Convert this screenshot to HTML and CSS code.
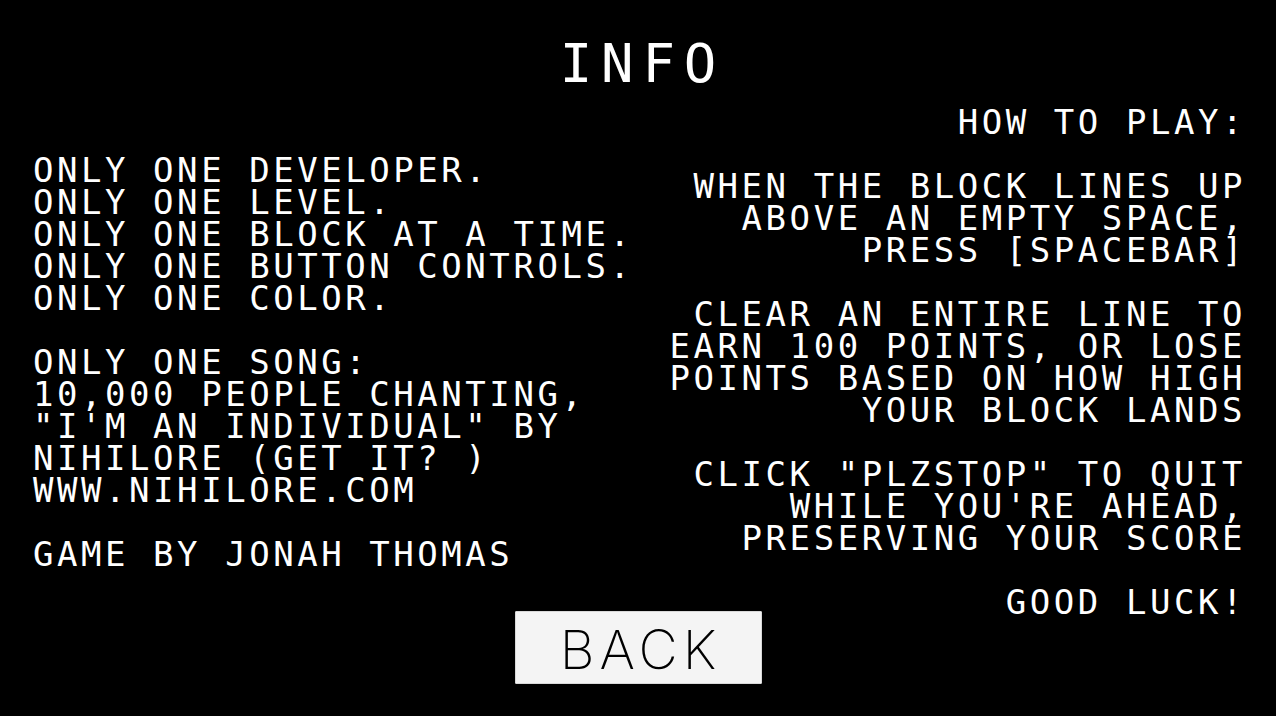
FILE: index.html
```html
<!DOCTYPE html>
<html lang="en">
<head>
<meta charset="utf-8">
<title>Info</title>
<link rel="stylesheet" href="styles.css">
</head>
<body>
<main class="screen">
  <h1 class="title">INFO</h1>
  <div class="columns">
    <section class="about">
      <p>ONLY ONE DEVELOPER.<br>ONLY ONE LEVEL.<br>ONLY ONE BLOCK AT A TIME.<br>ONLY ONE BUTTON CONTROLS.<br>ONLY ONE COLOR.</p>
      <p>ONLY ONE SONG:<br>10,000 PEOPLE CHANTING,<br>"I'M AN INDIVIDUAL" BY<br>NIHILORE (GET IT? )<br>WWW.NIHILORE.COM</p>
      <p>GAME BY JONAH THOMAS</p>
    </section>
    <section class="howto">
      <p>HOW TO PLAY:</p>
      <p>WHEN THE BLOCK LINES UP<br>ABOVE AN EMPTY SPACE,<br>PRESS [SPACEBAR]</p>
      <p>CLEAR AN ENTIRE LINE TO<br>EARN 100 POINTS, OR LOSE<br>POINTS BASED ON HOW HIGH<br>YOUR BLOCK LANDS</p>
      <p>CLICK "PLZSTOP" TO QUIT<br>WHILE YOU'RE AHEAD,<br>PRESERVING YOUR SCORE</p>
      <p>GOOD LUCK!</p>
    </section>
  </div>
  <div class="actions">
    <button class="back" type="button">BACK</button>
  </div>
</main>
</body>
</html>
```

FILE: styles.css
```css
html, body {
  margin: 0;
  padding: 0;
  background: #000;
}

.screen {
  width: 1276px;
  height: 716px;
  overflow: hidden;
  background: #000;
  color: #fff;
  font-family: "DejaVu Sans Mono", "Liberation Mono", monospace;
  display: flex;
  flex-direction: column;
}

.title {
  margin: 34px 0 0 0;
  font-size: 54px;
  line-height: 60px;
  font-weight: normal;
  letter-spacing: 8.8px;
  text-align: center;
  padding-left: 8.8px;
}

.columns {
  margin-top: 12px;
  display: grid;
  grid-template-columns: 1fr 1fr;
  padding: 0 30px 0 33px;
}

.about p,
.howto p {
  margin: 0 0 32px 0;
  font-size: 34px;
  line-height: 32px;
  letter-spacing: 3.55px;
  white-space: nowrap;
}

.about {
  padding-top: 48px;
}

.howto {
  text-align: right;
}

.howto p:last-child,
.about p:last-child {
  margin-bottom: 0;
}

.actions {
  display: flex;
  justify-content: center;
  margin-top: -7px;
  padding-left: 0;
}

.back {
  width: 247px;
  height: 73px;
  margin: 0;
  padding: 5px 0 0 5px;
  background: #f4f4f4;
  border: 1px solid #d8d8d8;
  border-radius: 1px;
  color: #000;
  font-family: "Inter", "Liberation Sans", sans-serif;
  font-weight: 200;
  font-size: 54px;
  line-height: 66px;
  letter-spacing: 5px;
}
```
